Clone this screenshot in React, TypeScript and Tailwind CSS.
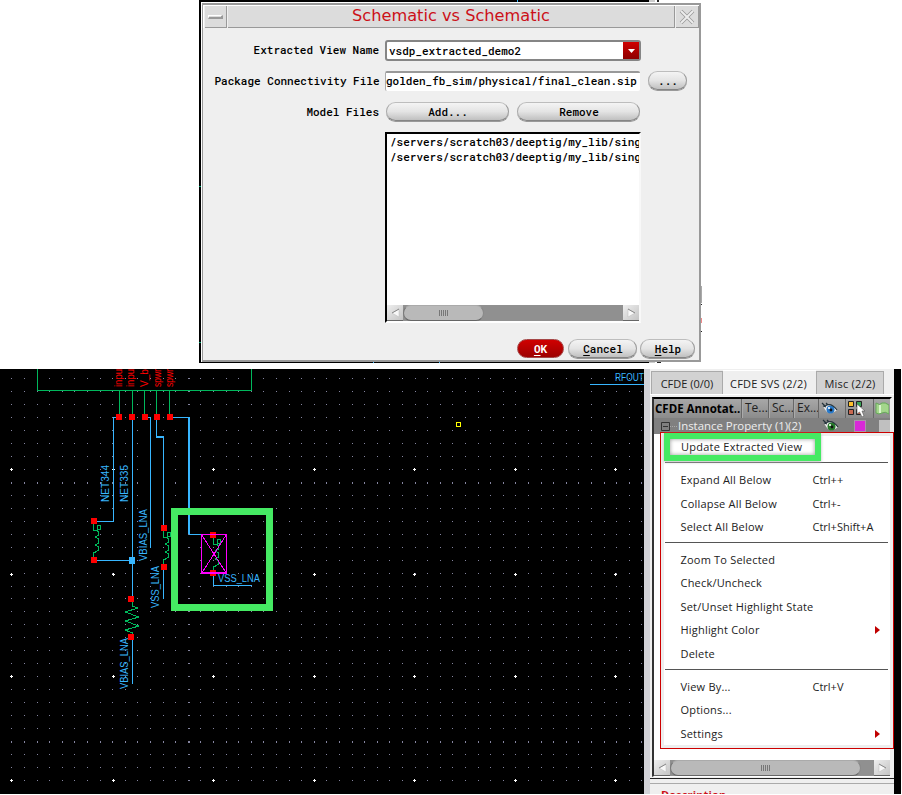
import React from "react";

const MONO = "font-['Roboto_Mono','DejaVu_Sans_Mono',monospace]";

const gridX: number[] = [];
for (let i = 0; i < 51; i++) gridX.push(Math.round(11.4 + i * 12.6));
const gridY: number[] = [];
for (let i = 0; i < 32; i++) gridY.push(Math.round(9 + i * 12.97));

function Pill({ children, className = "" }: { children: React.ReactNode; className?: string }) {
  return (
    <button
      className={`flex h-[19px] items-center justify-center rounded-full border border-t-[#bdbdbd] border-r-[#999] border-b-[#858585] border-l-[#aaa] bg-linear-to-b from-[#f4f4f4] via-[#e4e4e4] to-[#c0c0c0] pt-0.5 pl-px shadow-[0_1px_0_#999] ${className}`}
    >
      {children}
    </button>
  );
}

function ScrollArrow({ right = false }: { right?: boolean }) {
  return (
    <div className="flex h-4 w-4 shrink-0 items-center justify-center border-b border-[#666] bg-linear-to-br from-[#eee] to-[#c4c4c4]">
      <svg width="9" height="10">
        {right ? (
          <g>
            <path d="M1 1L8 5L1 9Z" fill="#f8f8f8" stroke="#bbb" strokeWidth=".5" />
            <path d="M1 1L8 5" stroke="#888" fill="none" />
          </g>
        ) : (
          <g>
            <path d="M8 1L1 5L8 9Z" fill="#f8f8f8" stroke="#bbb" strokeWidth=".5" />
            <path d="M8 1L1 5" stroke="#888" fill="none" />
          </g>
        )}
      </svg>
    </div>
  );
}

function Scrollbar({ thumb }: { thumb: string }) {
  return (
    <div className="flex h-4 w-full bg-[#909090]">
      <ScrollArrow />
      <div className="flex-1">
        <div
          className={`flex h-4 items-center justify-center gap-px rounded-full border border-t-[#aaa] border-r-[#888] border-b-[#666] border-l-[#777] bg-[#b9b9b9] ${thumb}`}
        >
          {[0, 1, 2, 3, 4].map((i) => (
            <i key={i} className="h-1.5 w-px bg-[#777]" />
          ))}
        </div>
      </div>
      <ScrollArrow right />
    </div>
  );
}

function Dialog() {
  return (
    <div
      className={`relative mt-[3px] ml-[202px] flex h-[359px] w-[499px] flex-col border-t-2 border-r-2 border-b-2 border-l border-[#999] bg-[#efefef] text-[11px] font-medium text-black ${MONO}`}
    >
      <div className="flex h-[23px] gap-px border-t border-l border-white pl-px">
        <div className="flex w-[22px] items-center justify-center border-r border-b border-[#999] bg-[#dcdcdc]">
          <i className="h-1 w-[15px] border-t border-r-2 border-b-2 border-l border-t-white border-r-[#999] border-b-[#999] border-l-white" />
        </div>
        <div className="flex w-[447px] items-center justify-center border-r border-b border-[#999] bg-[#dcdcdc] font-['DejaVu_Sans',sans-serif] text-[16.2px] font-normal text-[#cc1018]">
          Schematic vs Schematic
        </div>
        <div className="flex flex-1 items-center justify-center border-r border-b border-[#999] bg-[#dcdcdc]">
          <svg width="16" height="16" fill="none">
            <path d="M2 2L14 14M14 2L2 14" stroke="#999" strokeWidth="3.6" />
            <path d="M2 2L14 14M14 2L2 14" stroke="#ededed" strokeWidth="2" />
          </svg>
        </div>
      </div>
      <div className="mt-3 flex h-[21px] items-center">
        <div className="w-[176px] text-right">Extracted View Name</div>
        <div className="ml-1.5 flex h-[21px] w-[256px] rounded-[3px] border-2 border-[#858585] bg-white">
          <span className="flex-1 pt-px pl-0.5">vsdp_extracted_demo2</span>
          <span className="flex w-4 items-center justify-center bg-linear-to-b from-[#d00000] to-[#8d0000]">
            <svg width="7" height="4"><path d="M0 0H7L3.5 4Z" fill="#fff" /></svg>
          </span>
        </div>
      </div>
      <div className="mt-[9px] flex h-[21px] items-center">
        <div className="w-[176.5px] pt-0.5 text-right whitespace-nowrap">Package Connectivity File</div>
        <div className="ml-[5.5px] flex h-[20px] w-[255px] items-center overflow-hidden rounded-[2px] border-t-2 border-l border-t-[#999] border-l-[#aaa] bg-white whitespace-nowrap">
          golden_fb_sim/physical/final_clean.sip
        </div>
        <Pill className="ml-[8px] w-[39px]">...</Pill>
      </div>
      <div className="mt-[10px] flex h-5 items-center">
        <div className="w-[176px] pt-0.5 text-right">Model Files</div>
        <Pill className="ml-[7px] w-[123px]">Add...</Pill>
        <Pill className="ml-2 w-[123px]">Remove</Pill>
      </div>
      <div className="mt-[11px] ml-[182px] flex h-[191px] w-[256px] flex-col border-t-2 border-l-2 border-r-2 border-b-2 border-t-black border-r-[#f8f8f8] border-b-white border-l-black bg-white">
        <div className="flex-1 overflow-hidden pl-[3px] leading-[15px] whitespace-nowrap">
          <div>/servers/scratch03/deeptig/my_lib/sing</div>
          <div>/servers/scratch03/deeptig/my_lib/sing</div>
        </div>
        <Scrollbar thumb="w-[81px]" />
      </div>
      <div className="mt-4 flex justify-end gap-[3px] pr-1">
        <button className="mr-px flex h-[19px] w-[47px] items-center justify-center rounded-full border border-[#a54747] bg-linear-to-b from-[#d00000] to-[#9d0000] pt-0.5 font-bold text-white">
          <span className="underline underline-offset-2">O</span>K
        </button>
        <Pill className="w-[69px]"><span className="underline underline-offset-2">C</span>ancel</Pill>
        <Pill className="w-[55px]"><span className="underline underline-offset-2">H</span>elp</Pill>
      </div>
    </div>
  );
}

const nets: [string, number, number, number][] = [
  ["NET344", 109, 133, 37],
  ["NET335", 128, 133, 37],
  ["VBIAS_LNA", 147, 192, 52],
  ["VSS_LNA", 159, 239, 42],
  ["VBIAS_LNA", 128, 320, 51],
];
const pins: [string, number, number][] = [
  ["inpu", 122, 18],
  ["inpu", 134, 18],
  ["V_b", 148, 18],
  ["spwr", 161, 18],
  ["spwr", 173, 18],
];
const redPads = [
  [116, 45], [129, 45], [142, 45], [154, 45], [167, 45], [91, 149], [91, 188],
  [161, 156], [161, 195], [128, 227], [128, 265], [210, 163], [210, 201],
];

function Coil({ x, y }: { x: number; y: number }) {
  return (
    <path
      transform={`translate(${x} ${y})`}
      d="M0 0V7H3L5 9V12L2 14L5 16V20L2 22L5 24V27L2 29H0V36M4 3V6H7V2H4V3"
    />
  );
}

function Schematic() {
  return (
    <svg width="644" height="425" className="shrink-0 bg-black" shapeRendering="crispEdges">
      <g fill="#8585a0">
        {gridY.map((y) =>
          gridX.map((x) => (
            <rect key={`${x}-${y}`} x={x} y={y} width={x === 188 ? 2 : 1} height={y === 113 || y === 372 ? 2 : 1} />
          )),
        )}
      </g>
      <g stroke="#fff">
        {[100, 205, 307, 411].map((y) =>
          [11, 113, 213, 314, 414, 515, 615].map((x) => (
            <path key={`${x}-${y}`} d={`M${x - 1} ${y + 0.5}h3M${x + 0.5} ${y - 1}v3`} />
          )),
        )}
      </g>
      <g fill="none" stroke="#00b85c">
        <path d="M37.5 0V21.5H251.5V0M119.5 21V45M132.5 21V45M144.5 21V45M156.5 21V45M169.5 21V45" />
        <path d="M132.5 229V237L138 239L125 243L139 248L125 252L139 257L125 261L132.5 264V268" />
        <Coil x={93.5} y={154} />
        <Coil x={163.5} y={161} />
        <Coil x={213.5} y={168} />
      </g>
      <g fill="none" stroke="#38b6ff">
        <path d="M117 48.5H113.5V152.5H96M132.5 50V231M132.5 267V315M147 48.5H150.5V179M156.5 50V68H163.5V157M163.5 198V230M96 191.5H129M213.5 205V216.5H252M589.5 15.5H644" />
        <path d="M171 48.5H189V165.5H213" />
        <path d="M189 48V165M156 67.5H164" strokeWidth="2" />
      </g>
      <g fill="#ff0000">
        {redPads.map(([x, y]) => <rect key={`${x}-${y}`} x={x} y={y} width="6" height="6" />)}
      </g>
      <rect x="129" y="188" width="6" height="7" fill="#38b6ff" />
      <g fill="none" stroke="#ff00ff">
        <path d="M201.5 165.5H226.5V204.5H201.5ZM201.5 165.5L226.5 204.5M226.5 165.5L201.5 204.5" />
        <path d="M201 204H227" strokeWidth="2" />
      </g>
      <g fill="#38b6ff" className="font-['Liberation_Sans',sans-serif]" fontSize="10">
        {nets.map(([t, x, y, len], i) => (
          <text key={i} transform={`translate(${x} ${y}) rotate(-90)`} textLength={len} lengthAdjust="spacingAndGlyphs">{t}</text>
        ))}
        <text x="218" y="213" textLength="42" lengthAdjust="spacingAndGlyphs">VSS_LNA</text>
        <text x="615" y="12" textLength="29" lengthAdjust="spacingAndGlyphs">RFOUT</text>
      </g>
      <g fill="#ff0000" className="font-['Liberation_Sans',sans-serif]" fontSize="11">
        {pins.map(([t, x, y], i) => (
          <text key={i} transform={`translate(${x} ${y}) rotate(-90)`} textLength="18" lengthAdjust="spacingAndGlyphs">{t}</text>
        ))}
      </g>
      <rect x="174.5" y="142.5" width="95" height="96" fill="none" stroke="#45ea63" strokeWidth="7" />
      <rect x="456.5" y="53.5" width="4" height="4" fill="none" stroke="#ff0" />
    </svg>
  );
}

function Eye({ color }: { color: string }) {
  return (
    <svg width="18" height="13" viewBox="0 0 18 13" fill="none">
      <path d="M2 4Q9 0 16 8Q11 13 6 10Q4 8 2 4Z" fill="#eee" />
      <circle cx="9.500" cy="7.500" r="4" fill={color} />
      <circle cx="10" cy="8" r="1.400" fill="#111" />
      <circle cx="8" cy="6" r="1.100" fill="#fff" />
      <path d="M1 1L4 4Q10 0 16 8M2 4L5 5M5 1L7 3" stroke="#26343c" strokeWidth="1.2" />
    </svg>
  );
}

function MenuItem({ label, shortcut, submenu }: { label: string; shortcut?: string; submenu?: boolean }) {
  return (
    <div className="flex h-[23.5px] items-center pl-[15.5px]">
      <span className="w-[132px] tracking-[0.2px] whitespace-nowrap">{label}</span>
      <span className="w-[62.5px] whitespace-nowrap">{shortcut}</span>
      {submenu && <svg width="5" height="8"><path d="M0 0L5 4L0 8Z" fill="#c00000" /></svg>}
    </div>
  );
}

const Sep = ({ className = "" }: { className?: string }) => <div className={`mr-[2px] h-px bg-[#555] ${className}`} />;

function Menu() {
  return (
    <div className="absolute top-[63px] left-[10px] h-[317px] w-[234px] border border-[#cc0000] bg-[#eee] p-[3px] text-[11px] text-[#222]">
      <div className="h-full bg-white pl-px">
        <div className="h-6 pl-4 leading-[21px] tracking-[0.25px]">Update Extracted View</div>
        <Sep className="mt-[2px]" />
        <div className="pt-[5.5px]">
          <MenuItem label="Expand All Below" shortcut="Ctrl++" />
          <MenuItem label="Collapse All Below" shortcut="Ctrl+-" />
          <MenuItem label="Select All Below" shortcut="Ctrl+Shift+A" />
        </div>
        <Sep className="mt-[3px]" />
        <div className="pt-[5px]">
          <MenuItem label="Zoom To Selected" />
          <MenuItem label="Check/Uncheck" />
          <MenuItem label="Set/Unset Highlight State" />
          <MenuItem label="Highlight Color" submenu />
          <MenuItem label="Delete" />
        </div>
        <Sep className="mt-[3.5px]" />
        <div className="pt-[5px]">
          <MenuItem label="View By..." shortcut="Ctrl+V" />
          <MenuItem label="Options..." />
          <MenuItem label="Settings" submenu />
        </div>
      </div>
      <div className="absolute top-0 left-[3px] h-[28px] w-[157px] border-6 border-[#45ea63] shadow-[inset_0_0_4px_#999,0_1px_3px_#bbb]" />
    </div>
  );
}

function AnnotationPanel() {
  const col = "flex h-full items-center border-l border-[#686868] shadow-[inset_1px_0_0_#aaa] pl-[3px] overflow-hidden whitespace-nowrap";
  return (
    <div className="relative flex h-[425px] w-[250px] flex-col border-l-6 border-[#d2d2d7] bg-[#efefef] font-['Open_Sans',sans-serif] text-[11px] text-[#222]">
      <div className="flex h-[26px] items-end border-b border-white pl-px">
        <div className="flex h-[23px] w-[72px] items-center justify-center border border-b-0 border-[#aaa] bg-[#d2d2d2] pt-[3px]">CFDE (0/0)</div>
        <div className="flex h-[24px] w-[93px] items-center justify-center border-t border-white bg-[#efefef] pt-[3px] pr-0.5 tracking-[0.2px]">CFDE SVS (2/2)</div>
        <div className="flex h-[23px] w-[68px] items-center justify-center border border-b-0 border-[#aaa] bg-[#d2d2d2] pt-[3px] tracking-[0.2px]">Misc (2/2)</div>
      </div>
      <div className="mt-[2px] ml-[2px] flex h-[382px] w-[240px] flex-col border-t-2 border-r-2 border-b border-l-2 border-t-black border-r-[#eee] border-b-white border-l-[#333] bg-white">
        <div className="flex h-[19px] shrink-0 items-center bg-linear-to-b from-[#a8a8a8] to-[#8b8b8b] text-[12px] leading-[18px]">
          <span className="w-[87px] overflow-hidden pt-px pl-px text-[11.5px] font-bold whitespace-nowrap text-black">CFDE Annotat..</span>
          <span className={`${col} w-[27px]`}>Te...</span>
          <span className={`${col} w-[25px]`}>Sc...</span>
          <span className={`${col} w-[25px]`}>Ex...</span>
          <span className="flex h-full w-[27px] items-center border-l border-[#686868] pl-0.5"><Eye color="#2879c9" /></span>
          <span className="flex h-full w-[28px] items-center border-l border-[#686868] pl-0.5">
            <svg width="20" height="17">
              <g stroke="#222">
                <path fill="#ffc12c" d="M.5 1.500h5v5h-5z" />
                <path fill="#38a455" d="M8.500 1.500h5v5h-5z" />
                <path fill="#c86850" d="M.5 9.500h5v5h-5z" />
                <path fill="#c86850" d="M8.500 9.500h5v5h-5z" />
              </g>
              <path d="M9 4V14L11.500 12L14 17L16 16L14 11H17Z" fill="#fff" stroke="#555" strokeWidth=".6" />
            </svg>
          </span>
          <span className="flex h-full flex-1 items-center border-l border-[#686868] pl-px">
            <svg width="14" height="13"><path d="M1 1Q5 4 7 1Q10 0 14 3V12Q10 9 7 11Q4 13 1 11Z" fill="#a3d68b" stroke="#66a85a" /><path d="M5 3V11" stroke="#d9f5cc" strokeWidth="2" /></svg>
          </span>
        </div>
        <div className="flex h-4 shrink-0 items-center bg-[#808080] text-[#eee]">
          <svg width="20" height="10" className="ml-[7px] shrink-0" fill="none"><path d="M.5 1.500h8v8h-8zM2 5.500h5" stroke="#333" /><path d="M9 5.500h8" stroke="#aaa" strokeDasharray="1 1" /></svg>
          <span className="ml-[-3px] w-[144px] text-[11.4px] whitespace-nowrap">Instance Property (1)(2)</span>
          <Eye color="#287b2c" />
          <i className="ml-[14px] h-[12px] w-[12px] border border-[#a995aa] bg-[#d829d8]" />
          <i className="ml-[13px] h-[12px] flex-1 bg-[#c0c0c0]" />
        </div>
        <div className="flex-1" />
        <Scrollbar thumb="w-[191px]" />
      </div>
      <div className="mt-px h-px w-full bg-[#222]" />
      <div className="mt-1 h-px w-full bg-[#aaa]" />
      <div className="h-[10px] overflow-hidden pt-[4px] pl-[11px] text-[11px] leading-[14px] font-bold tracking-[0.2px] text-[#cc1018]">Description</div>
      <Menu />
    </div>
  );
}

export default function App() {
  return (
    <main className="h-[795px] w-[902px] overflow-hidden bg-white">
      <section className="relative flex h-[369px] items-start">
        <svg className="absolute inset-0" width="902" height="369" shapeRendering="crispEdges">
          <path d="M199 0H649V2H201V362H649V363H199Z" fill="#000" />
          <path d="M649 0H655V2H649ZM649 362H655V363H649Z" fill="#ccc" />
          <path d="M657 0H659V2H657ZM657 362H661V363H657ZM701 304H702V305H701ZM701 331H702V332H701Z" fill="#222" />
          <path d="M199 186H201V187H199ZM199 342H201V343H199Z" fill="#00a774" />
          <path d="M517 0H518V2H517ZM373 362H374V363H373ZM439 362H440V363H439Z" fill="#38b6ff" />
          <path d="M701 286H702V303H701Z" fill="#aaa" />
          <path d="M701 318H702V323H701Z" fill="#e88" />
        </svg>
        <Dialog />
      </section>
      <section className="flex h-[425px] w-[901px] bg-black">
        <Schematic />
        <AnnotationPanel />
      </section>
    </main>
  );
}
